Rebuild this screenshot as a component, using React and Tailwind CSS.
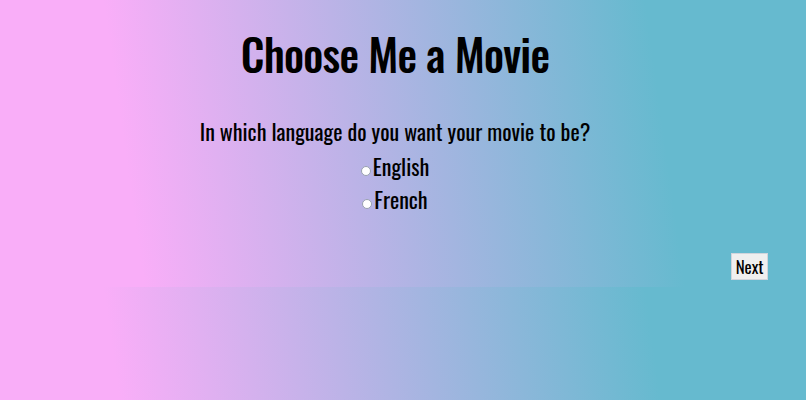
export default function App() {
  return (
    <div className="h-[400px] w-full overflow-hidden bg-[linear-gradient(82deg,#f9aef8_17%,#66bacf_81%)] bg-[length:100%_287px] bg-repeat font-['Oswald',sans-serif] text-black">
      <div className="flex h-[287px] flex-col">
        <div className="flex flex-col items-center pr-[16px]">
          <h1 className="mt-[26px] text-[44px] font-medium leading-[56px] tracking-[-0.75px]">Choose Me a Movie</h1>
          <p className="mt-[33px] text-[22px] font-normal leading-[32px]">In which language do you want your movie to be?</p>
          <div className="mt-[3px] flex flex-col items-center">
            <label className="flex items-baseline text-[22px] leading-[33px]">
              <span className="mr-[2px] inline-block h-[10px] w-[10px] rounded-full border border-gray-400 bg-white" />
              English
            </label>
            <label className="flex items-baseline text-[22px] leading-[33px]">
              <span className="mr-[2px] inline-block h-[10px] w-[10px] rounded-full border border-gray-400 bg-white" />
              French
            </label>
          </div>
        </div>
        <div className="mt-[37px] flex w-full justify-end pr-[38px]">
          <button className="h-[27px] border border-gray-300 bg-[#efefef] px-[3.5px] text-[17px] leading-[25px]">Next</button>
        </div>
      </div>
    </div>
  );
}
